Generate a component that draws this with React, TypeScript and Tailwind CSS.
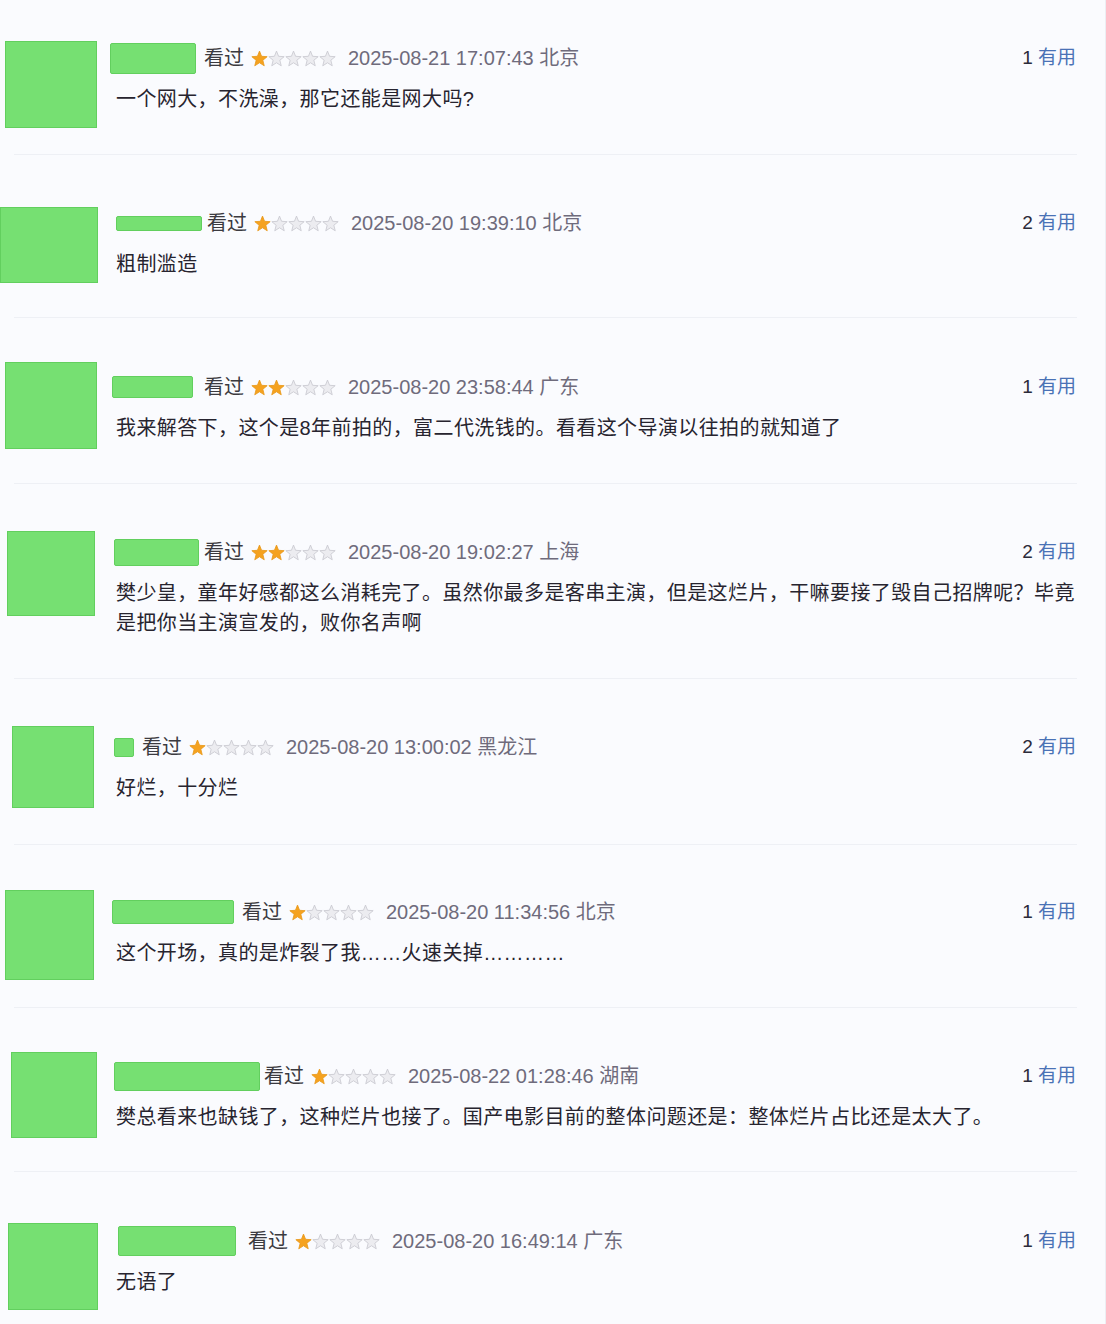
const font = { fontFamily: '"Liberation Sans", "Noto Sans CJK SC", sans-serif' };

type Review = {
  section: string;
  avatar: string;
  content: string;
  name: string;
  stars: number;
  time: string;
  place: string;
  useful: number;
  text: string;
};

const reviews: Review[] = [
  {
    section: "h-[154px]",
    avatar: "ml-[5px] mt-[41px] w-[92px] h-[87px]",
    content: "pt-[42px]",
    name: "-ml-[6px] mr-[8px] w-[86px] h-[31px]",
    stars: 1,
    time: "2025-08-21 17:07:43",
    place: "北京",
    useful: 1,
    text: "一个网大，不洗澡，那它还能是网大吗?"
  },
  {
    section: "h-[162px]",
    avatar: "ml-0 mt-[52px] w-[98px] h-[76px]",
    content: "pt-[52px]",
    name: "ml-0 mr-[5px] w-[86px] h-[15px]",
    stars: 1,
    time: "2025-08-20 19:39:10",
    place: "北京",
    useful: 2,
    text: "粗制滥造"
  },
  {
    section: "h-[165px]",
    avatar: "ml-[5px] mt-[44px] w-[92px] h-[87px]",
    content: "pt-[53px]",
    name: "-ml-[4px] mr-[11px] w-[81px] h-[22px]",
    stars: 2,
    time: "2025-08-20 23:58:44",
    place: "广东",
    useful: 1,
    text: "我来解答下，这个是8年前拍的，富二代洗钱的。看看这个导演以往拍的就知道了"
  },
  {
    section: "h-[194px]",
    avatar: "ml-[7px] mt-[47px] w-[88px] h-[85px]",
    content: "pt-[52px]",
    name: "-ml-[2px] mr-[5px] w-[85px] h-[27px]",
    stars: 2,
    time: "2025-08-20 19:02:27",
    place: "上海",
    useful: 2,
    text: "樊少皇，童年好感都这么消耗完了。虽然你最多是客串主演，但是这烂片，干嘛要接了毁自己招牌呢？毕竟是把你当主演宣发的，败你名声啊"
  },
  {
    section: "h-[165px]",
    avatar: "ml-[12px] mt-[47px] w-[82px] h-[82px]",
    content: "pt-[52px]",
    name: "-ml-[2px] mr-[8px] w-[20px] h-[19px]",
    stars: 1,
    time: "2025-08-20 13:00:02",
    place: "黑龙江",
    useful: 2,
    text: "好烂，十分烂"
  },
  {
    section: "h-[162px]",
    avatar: "ml-[5px] mt-[45px] w-[89px] h-[90px]",
    content: "pt-[51px]",
    name: "-ml-[4px] mr-[8px] w-[122px] h-[24px]",
    stars: 1,
    time: "2025-08-20 11:34:56",
    place: "北京",
    useful: 1,
    text: "这个开场，真的是炸裂了我……火速关掉…………"
  },
  {
    section: "h-[163px]",
    avatar: "ml-[11px] mt-[44px] w-[86px] h-[86px]",
    content: "pt-[52px]",
    name: "-ml-[2px] mr-[4px] w-[146px] h-[29px]",
    stars: 1,
    time: "2025-08-22 01:28:46",
    place: "湖南",
    useful: 1,
    text: "樊总看来也缺钱了，这种烂片也接了。国产电影目前的整体问题还是：整体烂片占比还是太大了。"
  },
  {
    section: "h-[152px]",
    avatar: "ml-[8px] mt-[51px] w-[90px] h-[87px]",
    content: "pt-[53px]",
    name: "ml-[2px] mr-[12px] w-[118px] h-[30px]",
    stars: 1,
    time: "2025-08-20 16:49:14",
    place: "广东",
    useful: 1,
    text: "无语了"
  }
];

// rating star, orange when on, pale outline otherwise
const Star = ({ on }: { on: boolean }) => (
  <svg width="17" height="17" viewBox="0 0 24 24" className="shrink-0">
    <polygon
      points="12,1.5 14.9,8.9 22.8,9.4 16.7,14.5 18.7,22.3 12,18 5.3,22.3 7.3,14.5 1.2,9.4 9.1,8.9"
      fill={on ? "#f5a21f" : "#ececf0"}
      stroke={on ? "#e89a1c" : "#c9c9d0"}
      strokeWidth="1.2"
      strokeLinejoin="round"
    />
  </svg>
);

const ReviewRow = ({ review, last }: { review: Review; last: boolean }) => (
  <div>
    <div className={`flex ${review.section}`}>
      <div className="w-[116px] shrink-0">
        <div className={`border border-[#62cf5e] bg-[#76e072] ${review.avatar}`} />
      </div>
      <div className={`flex-1 pr-[29px] ${review.content}`}>
        <div className="flex h-[32px] items-center">
          <div className={`shrink-0 rounded-[2px] border border-[#62cf5e] bg-[#76e072] ${review.name}`} />
          <span className="text-[20px] leading-[32px] text-[#3b3a40]">看过</span>
          <div className="ml-[7px] flex">
            {[0, 1, 2, 3, 4].map((i) => (
              <Star key={i} on={i < review.stars} />
            ))}
          </div>
          <span className="ml-[12px] text-[20px] leading-[32px] text-[#6f6b7c]">
            {review.time} {review.place}
          </span>
          <span className="ml-auto text-[19px] leading-[32px]">
            <span className="text-[#2c2b3a]">{review.useful}</span>{" "}
            <span className="text-[#4a72b6]">有用</span>
          </span>
        </div>
        <p className="mt-[10px] text-[20px] leading-[30px] tracking-[0.4px] text-[#27242f]">{review.text}</p>
      </div>
    </div>
    {last ? null : <div className="ml-[14px] mr-[28px] h-px bg-[#eef0f5]" />}
  </div>
);

export default function App() {
  return (
    <main className="h-[1324px] w-[1106px] overflow-hidden border-r border-[#eceef3] bg-[#fafbfe]" style={font}>
      {reviews.map((review, index) => (
        <ReviewRow key={index} review={review} last={index === reviews.length - 1} />
      ))}
    </main>
  );
}
